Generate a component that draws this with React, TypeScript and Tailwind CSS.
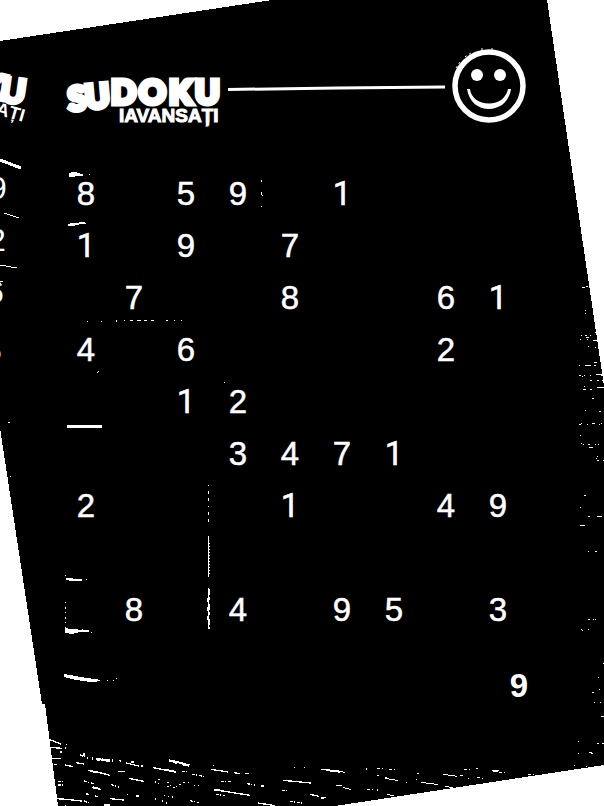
const puzzle = [
  '8.59.1...',
  '1.9.7....',
  '.7..8..61',
  '4.6....2.',
  '..12.....',
  '...3471..',
  '2...1..49',
  '.........',
  '.8.4.95.3',
];

function Digit({ value }: { value: string }) {
  if (value === '1') return <span className="font-[Roboto,sans-serif]">1</span>;
  return <>{value}</>;
}

function Paper() {
  return (
    <svg
      className="absolute inset-0 h-full w-full"
      viewBox="0 0 604 806"
      preserveAspectRatio="none"
      shapeRendering="crispEdges"
      aria-hidden="true"
    >
      <polygon points="0,41 272,0 547,0 604,386 604,765 335,806 58,806 45,704 42,704 0,428" fill="#000" />

      {/* neighbouring page */}
      <g fill="#fff" fontFamily="'Liberation Sans', sans-serif">
        <g fontFamily="Lato, sans-serif" fontWeight="900" fontSize="34" stroke="#fff" strokeWidth="4">
          <text transform="translate(-22 94) rotate(14)">K</text>
          <text transform="translate(-1 101) rotate(8)">U</text>
        </g>
        <text transform="translate(-5 114) rotate(16)" fontWeight="700" fontSize="18">
          AȚI
        </text>
        <text x="-11" y="199" fontSize="32">9</text>
        <text x="-12" y="251" fontSize="32">2</text>
        <text x="-14" y="303" fontSize="32">6</text>
        <text x="-15" y="361" fontSize="30">5</text>
      </g>
      <g fill="none" stroke="#fff">
        <path d="M0 160L21 168" strokeWidth="3" />
        <path d="M4 213L19 218M0 265L17 268M0 281H3" strokeWidth="1" />
      </g>

      {/* remains of the grid lines */}
      <g transform="translate(0 140) scale(.33333)" fill="#fff">
        <path d="M207 98L228 96 240 101H249V107H232L220 111H207ZM267 102h3v3h-3zM204 251L235 248 246 245 258 249V252L232 254 220 258H204Z" />
        <path d="M783 121h3v5h-3zM783 156h3v9h-3zM786 164h3v3h-3zM783 198h3v3h-3zM291 695h3v3h-3zM294 692h3v3h-3z" />
        <path d="M261 543h3v3h-3zM303 543h3v3h-3zM348 540h3v6h-3zM372 540h3v3h-3zM390 540h9v3h-9zM411 540h12v3h-12zM432 540h9v3h-9zM453 540h9v3h-9zM498 540h6v3h-6zM522 540h3v3h-3zM543 540h3v3h-3z" />
      </g>
      <g transform="translate(0 380) scale(.33333)" fill="#fff">
        <path d="M201 135H305V144H201ZM198 594H210L228 597H246V603H216L198 600ZM195 585h3v3h-3zM258 597h3v3h-3zM24 126h6v3h-6zM30 288h3v3h-3zM672 6h3v3h-3z" />
        <path d="M195 741L207 747H234V750H267V756H240L216 762 195 758ZM273 756h3v3h-3zM246 747h3v3h-3zM192 882L210 885 240 891 270 895 306 900 288 905H264L228 900 192 891ZM321 900h3v3h-3zM339 900h3v3h-3zM348 894h3v3h-3z" />
        <path d="M196 666V744" stroke="#fff" strokeWidth="3" strokeDasharray="3 12 6 9" />
        <path d="M625 315V426" stroke="#fff" strokeWidth="3" strokeDasharray="3 15 9 12 9 15" />
        <path d="M625 468V591M625 624V747" stroke="#fff" strokeWidth="3" />
        <path d="M628 490V588" stroke="#fff" strokeWidth="3" strokeDasharray="3 6" />
        <path d="M628 627V747" stroke="#fff" strokeWidth="3" strokeDasharray="18 6 9 12" />
        <path d="M622 654V735" stroke="#fff" strokeWidth="3" strokeDasharray="12 15" />
      </g>

      {/* grain along the bottom edge */}
      <g transform="translate(30 680) scale(.33333)" fill="none" stroke="#fff" strokeWidth="4">
        <path d="M54 177L93 192M60 202L96 205M60 236H93M78 356L108 358 156 363M138 248L162 252M105 255L129 260M174 271L201 276 240 286M297 295L342 304M288 249L327 258M369 263L438 276M543 268L594 276M552 329L660 346M759 301L843 309M684 369L735 377M240 356L282 360M840 343L867 349M873 268H888M888 272H900M264 275H285M612 278L630 281M645 281H657M186 323L213 328" />
        <path d="M198 236L240 243M417 242L438 245 477 256M405 269L435 275M189 322L210 327M222 374H240M552 331H570M180 273L198 276" strokeWidth="6" />
        <path d="M186 236L252 243M417 242L480 258" strokeWidth="8" strokeDasharray="3 9 12 6" />
        <path d="M150 225L174 234M162 220V234M267 241L273 244M303 246H315M336 255V261M456 275H471M486 283L522 289M162 303L195 312M243 313L267 322M84 305H105M72 254H84M84 315H102M168 341L180 345M195 347L207 353M318 348H330M162 363L180 370M480 362L507 368M558 343L585 347M572 304H603M651 311L675 315M756 332H771M780 364L819 370M873 354H882" strokeDasharray="9 4 3 5" />
        <path d="M375 307L393 295M384 311H390M420 315L435 323M438 320L462 306M462 307H486M414 305V320M492 316H513M402 347L438 353M396 363L411 369M375 357H381M549 256H552M792 262H795M822 262H825M105 204H114M93 214V218M108 194H114M291 343H294M105 376H108" strokeDasharray="4 8" />
        <path d="M693 317H702" strokeWidth="6" />
      </g>
      <g transform="translate(320 680) scale(.33333)" fill="none" stroke="#fff" strokeWidth="3">
        <path d="M3 268L33 271 75 277M30 274H66M198 295L234 302M516 272H537M369 283L411 289M303 307L351 313M48 317H66M69 323L93 328M201 343L222 348M375 319L399 323" />
        <path d="M24 271L60 275M198 290V297M519 274H534" strokeWidth="6" />
        <path d="M171 264L195 266M207 270H228M432 268H453M468 268L474 264M537 277H558M420 286H435M444 295H447M471 292L495 296M291 280H297M288 298H291M351 314H354M141 328H165M174 328V333M171 288H177M258 307H261M12 352H18M141 265V271M624 283H642M762 256H765M798 259H801M774 184H777M774 220H777M807 217H819M831 190H837M846 192H852M843 110H852M816 37H822M837 28H840M822 67H825M840 67H843" strokeDasharray="9 5 3 6" />
      </g>

      {/* grain along the right edge */}
      <g transform="translate(500 240) scale(.33333)" fill="none" stroke="#fff" strokeWidth="3">
        <path d="M246 142H255M258 139H264M255 211H258M255 220H258M240 298H243M243 286H246M255 286H261M258 292H267M261 298H264M270 286H273M279 301H291M285 279H291M264 319H267M285 322H288M237 376H240M255 376H273M282 367H291M282 376H288M237 406H243M246 409H249M252 406H255M270 406H273M288 403H297M297 403H312M303 408H309M270 421H276M291 421H297M306 421H312M252 439H255M249 448H258M270 448H276M291 442H312M276 475H282M255 511H258M297 514H303M237 553H243M243 550H246M261 553H264M276 550H285M297 553H300M303 550H306M240 586H243M243 610H246M249 613H252M264 613H270M285 613H288M294 613H297M267 622H279M288 655H291M291 650H294M291 661H297M309 661H312M252 766H258M240 802H243M264 829H270M291 829H306M240 856H255M264 934H267M285 934H291M264 1138H270M279 1138H282M285 1138H288M243 1168H246M246 1171H249M264 1168H267M309 1270H312M294 1312H297M297 1348H300M276 1357H282M282 1387H285M300 1387H303M303 1430H312M234 1504H237M291 1510H294M306 1512H312M234 1540H237M267 1537H270M273 1540H279" />
      </g>
    </svg>
  );
}

function Logo() {
  return (
    <svg className="h-20 w-40 shrink-0" viewBox="0 0 160 80" role="img" aria-label="Sudoku avansați" fill="#fff">
      <g fontFamily="Lato, sans-serif" fontWeight="900" fontSize="33" stroke="#fff" strokeWidth="5" strokeLinejoin="miter">
        <text transform="translate(5 63) rotate(-5)">S</text>
        <text transform="translate(22 61) rotate(-5)">U</text>
        <text x="47" y="56">D</text>
        <text x="75" y="56">O</text>
        <text x="105" y="56">K</text>
        <text x="131" y="56">U</text>
      </g>
      <text x="55" y="74" fontFamily="'Liberation Sans', sans-serif" fontWeight="700" fontSize="19" stroke="#fff" strokeWidth="1">
        IAVANSAȚI
      </text>
    </svg>
  );
}

function Smiley() {
  return (
    <svg className="size-[76px] shrink-0" viewBox="0 0 76 76" role="img" aria-label="Smiley">
      <circle cx="38" cy="38" r="34" fill="none" stroke="#fff" strokeWidth="5.5" />
      <circle cx="26" cy="27" r="6" fill="#fff" />
      <circle cx="49" cy="27" r="6" fill="#fff" />
      <path d="M16 41H19C20 50 28 55.500 38 55.500S55 50 57 41H60C58 54 49 61 38 61S18 54 16 41Z" fill="#fff" />
      <path d="M5 20L9 14M14 9L20 5M30 1H34M40 1H43" stroke="#fff" strokeDasharray="2 3" />
    </svg>
  );
}

export default function App() {
  return (
    <main className="relative min-h-screen w-full overflow-hidden bg-white font-['Liberation_Sans',Arial,sans-serif] text-white">
      <Paper />
      <div className="relative pt-12">
        <header className="flex items-start pr-[77px] pl-16">
          <Logo />
          <svg className="mt-9 mr-1 ml-1 h-2 min-w-0 flex-1" viewBox="0 0 220 8" preserveAspectRatio="none" aria-hidden="true">
            <path d="M0 5.500L110 4 218 3" fill="none" stroke="#fff" strokeWidth="3" />
          </svg>
          <Smiley />
        </header>
        <div className="mt-10 pr-20 pl-14">
          <table className="w-full table-fixed border-collapse text-center text-[33px] leading-[52px] [-webkit-text-stroke:0.5px_white]">
            <tbody>
              {puzzle.map((row, r) => (
                <tr key={r} className="h-[52px]">
                  {row.split('').map((cell, c) => (
                    <td key={c} className="p-0 first:pl-2">
                      {cell !== '.' && <Digit value={cell} />}
                    </td>
                  ))}
                </tr>
              ))}
            </tbody>
          </table>
        </div>
        <p className="mt-6 pr-[76px] text-right text-[33px] leading-[52px] font-bold">9</p>
      </div>
    </main>
  );
}
